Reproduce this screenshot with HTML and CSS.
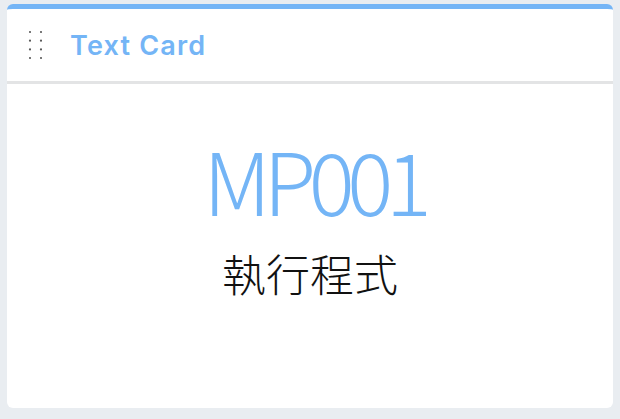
FILE: index.html
```html
<!DOCTYPE html>
<html>
<head>
<meta charset="utf-8">
<link rel="stylesheet" href="styles.css">
</head>
<body>
<div class="page">
  <div class="card">
    <div class="card-header">
      <span class="handle">
        <svg width="15" height="30" viewBox="0 0 15 30">
          <g fill="#5a5a5a">
            <circle cx="2" cy="2" r="1.1"/><circle cx="13" cy="2" r="1.1"/>
            <circle cx="2" cy="10.7" r="1.1"/><circle cx="13" cy="10.7" r="1.1"/>
            <circle cx="2" cy="19.4" r="1.1"/><circle cx="13" cy="19.4" r="1.1"/>
            <circle cx="2" cy="28" r="1.1"/><circle cx="13" cy="28" r="1.1"/>
          </g>
        </svg>
      </span>
      <span class="title">Text Card</span>
    </div>
    <div class="card-body">
      <div class="value">MP001</div>
      <div class="label">執行程式</div>
    </div>
  </div>
</div>
</body>
</html>
```
FILE: styles.css
```css
html, body {
  margin: 0;
  padding: 0;
  background: #e9edf1;
}
.page {
  width: 620px;
  height: 419px;
  box-sizing: border-box;
  padding: 4px 7px 11px 7px;
  display: flex;
}
.card {
  flex: 1;
  background: #ffffff;
  border-top: 5px solid #74b5f6;
  border-radius: 6px;
  display: flex;
  flex-direction: column;
  overflow: hidden;
}
.card-header {
  height: 75px;
  box-sizing: border-box;
  border-bottom: 3px solid #e3e4e5;
  display: flex;
  align-items: center;
  padding-left: 21px;
}
.handle {
  display: flex;
  width: 15px;
  height: 30px;
  margin-right: 27px;
}
.title {
  font-family: "Inter", "Liberation Sans", sans-serif;
  font-weight: 600;
  font-size: 27px;
  letter-spacing: 1.2px;
  color: #74b5f6;
}
.card-body {
  flex: 1;
  display: flex;
  flex-direction: column;
  align-items: center;
  justify-content: center;
  padding-bottom: 62px;
}
.value {
  font-family: "Noto Sans CJK TC", "Noto Sans", sans-serif;
  font-weight: 300;
  font-size: 86px;
  line-height: 1;
  letter-spacing: -7.5px;
  margin-right: -7.5px;
  color: #74b5f6;
}
.label {
  font-family: "Noto Sans CJK TC", sans-serif;
  font-weight: 300;
  font-size: 44px;
  line-height: 1;
  color: #111;
  margin-top: 29px;
}
```
